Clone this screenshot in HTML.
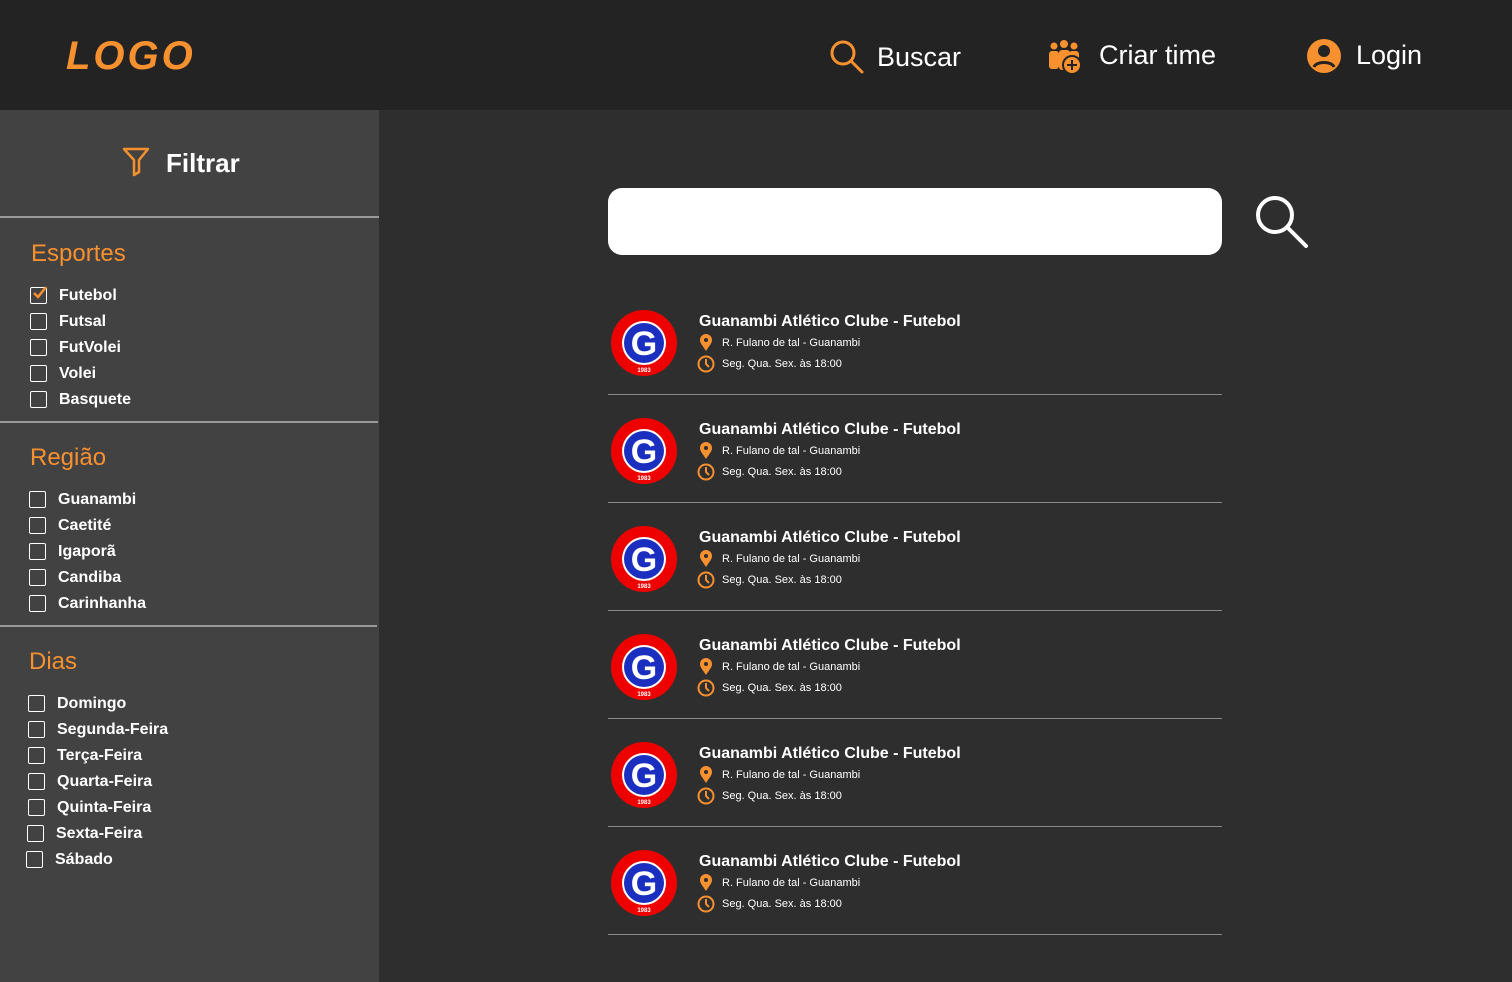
<!DOCTYPE html>
<html><head><meta charset="utf-8"><style>
*{margin:0;padding:0;box-sizing:border-box}
body{width:1512px;height:982px;background:#2e2e2e;font-family:"Liberation Sans",sans-serif;color:#fff;position:relative;overflow:hidden}
.hdr{position:absolute;left:0;top:0;width:1512px;height:110px;background:#232323}
.logo{position:absolute;left:66px;top:34px;font-size:40px;font-weight:bold;font-style:italic;color:#f7902f;letter-spacing:3px}
.nav{position:absolute;top:40px;font-size:27px;color:#fff}
.side{position:absolute;left:0;top:110px;width:379px;height:872px;background:#424242}
.hr{position:absolute;height:2px;background:#9a9a9a;left:0}
.sec{position:absolute;font-size:24px;color:#f7902f}
.cb{position:absolute;font-size:16px;font-weight:bold;color:#fff}
.cb::before{content:"";position:absolute;left:-29px;top:0px;width:15px;height:15px;border:1.5px solid #fff;border-radius:2px}
.item{position:absolute;left:608px;width:614px;height:108px;border-bottom:1px solid #8a8a8a}
.item .t{position:absolute;left:91px;top:26px;font-size:16px;font-weight:bold}
.item .a{position:absolute;left:114px;top:50px;font-size:11px}
.item .b{position:absolute;left:114px;top:71px;font-size:11px}
</style></head><body>
<div class="hdr">
<div class="logo">LOGO</div>
<svg style="position:absolute;left:829px;top:39px" width="36" height="36" viewBox="0 0 36 36"><circle cx="14" cy="14" r="11" fill="none" stroke="#f7902f" stroke-width="3"/><line x1="22" y1="22" x2="33" y2="33" stroke="#f7902f" stroke-width="3" stroke-linecap="round"/></svg>
<div class="nav" style="left:877px;top:42px">Buscar</div>
<svg style="position:absolute;left:1047px;top:39px" width="36" height="36" viewBox="0 0 36 36" fill="#f7902f"><circle cx="7" cy="7" r="3.5"/><circle cx="17" cy="5" r="4"/><circle cx="27" cy="7" r="3.5"/><rect x="2" y="12" width="10" height="18" rx="3"/><rect x="12" y="11" width="11" height="20" rx="3"/><rect x="22" y="12" width="10" height="10" rx="3"/><circle cx="25" cy="26" r="9" fill="#f7902f" stroke="#232323" stroke-width="2"/><path d="M25 21v10M20 26h10" stroke="#232323" stroke-width="2"/></svg>
<div class="nav" style="left:1099px">Criar time</div>
<svg style="position:absolute;left:1306px;top:38px" width="36" height="36" viewBox="0 0 36 36"><circle cx="18" cy="18" r="17" fill="#f7902f"/><circle cx="18" cy="13" r="6" fill="#232323"/><path d="M8 29c2-6 18-6 20 0" fill="none" stroke="#232323" stroke-width="3"/></svg>
<div class="nav" style="left:1356px">Login</div>
</div>
<div class="side">
<svg style="position:absolute;left:122px;top:37px" width="28" height="30" viewBox="0 0 28 30"><path d="M2 2h24l-9 11v12l-5 3V13z" fill="none" stroke="#f7902f" stroke-width="2.5" stroke-linejoin="round"/></svg>
<div style="position:absolute;left:166px;top:38px;font-size:26px;font-weight:bold">Filtrar</div>
</div>
<div class="hr" style="top:216px;width:379px"></div>
<div class="hr" style="top:421px;width:378px"></div>
<div class="hr" style="top:625px;width:377px"></div>
<div class="sec" style="left:31px;top:240px">Esportes</div>
<div class="cb" style="left:59px;top:287px">Futebol</div>
<svg style="position:absolute;left:31px;top:285px" width="18" height="16"><path d="M3 8l4 4 8-10" stroke="#f7902f" stroke-width="2.5" fill="none"/></svg>
<div class="cb" style="left:59px;top:313px">Futsal</div>
<div class="cb" style="left:59px;top:339px">FutVolei</div>
<div class="cb" style="left:59px;top:365px">Volei</div>
<div class="cb" style="left:59px;top:391px">Basquete</div>
<div class="sec" style="left:30px;top:444px">Região</div>
<div class="cb" style="left:58px;top:491px">Guanambi</div>
<div class="cb" style="left:58px;top:517px">Caetité</div>
<div class="cb" style="left:58px;top:543px">Igaporã</div>
<div class="cb" style="left:58px;top:569px">Candiba</div>
<div class="cb" style="left:58px;top:595px">Carinhanha</div>
<div class="sec" style="left:29px;top:648px">Dias</div>
<div class="cb" style="left:57px;top:695px">Domingo</div>
<div class="cb" style="left:57px;top:721px">Segunda-Feira</div>
<div class="cb" style="left:57px;top:747px">Terça-Feira</div>
<div class="cb" style="left:57px;top:773px">Quarta-Feira</div>
<div class="cb" style="left:57px;top:799px">Quinta-Feira</div>
<div class="cb" style="left:56px;top:825px">Sexta-Feira</div>
<div class="cb" style="left:55px;top:851px">Sábado</div>
<div style="position:absolute;left:608px;top:188px;width:614px;height:67px;background:#fff;border-radius:14px"></div>
<svg style="position:absolute;left:1254px;top:194px" width="56" height="56" viewBox="0 0 56 56"><circle cx="21" cy="21" r="17" fill="none" stroke="#fff" stroke-width="4"/><line x1="33" y1="33" x2="52" y2="52" stroke="#fff" stroke-width="4" stroke-linecap="round"/></svg>
<div id="list"></div>
<script>
var h='';for(var i=0;i<6;i++){var t=287+i*108;h+='<div class="item" style="top:'+t+'px"><svg style="position:absolute;left:2px;top:22px" width="68" height="68" viewBox="0 0 68 68"><circle cx="34" cy="34" r="33" fill="#e00"/><circle cx="34" cy="34" r="22" fill="#fff"/><circle cx="34" cy="34" r="20" fill="#1a2fc0"/><text x="34" y="46" text-anchor="middle" font-family="Liberation Sans" font-weight="bold" font-size="34" fill="#fff">G</text><text x="34" y="63" text-anchor="middle" font-family="Liberation Sans" font-weight="bold" font-size="6" fill="#fff">1983</text></svg><div class="t">Guanambi Atlético Clube - Futebol</div><svg style="position:absolute;left:91px;top:47px" width="14" height="18" viewBox="0 0 14 18"><path d="M7 17C3 11 1 9 1 6a6 6 0 0112 0c0 3-2 5-6 11z" fill="#f7902f"/><circle cx="7" cy="6" r="2" fill="#2e2e2e"/></svg><div class="a">R. Fulano de tal - Guanambi</div><svg style="position:absolute;left:89px;top:68px" width="18" height="18" viewBox="0 0 18 18"><circle cx="9" cy="9" r="7.5" fill="none" stroke="#f7902f" stroke-width="2"/><path d="M9 4v5l3 3" fill="none" stroke="#f7902f" stroke-width="2"/></svg><div class="b">Seg. Qua. Sex. às 18:00</div></div>';}
document.getElementById('list').innerHTML=h;
</script>
</body></html>
